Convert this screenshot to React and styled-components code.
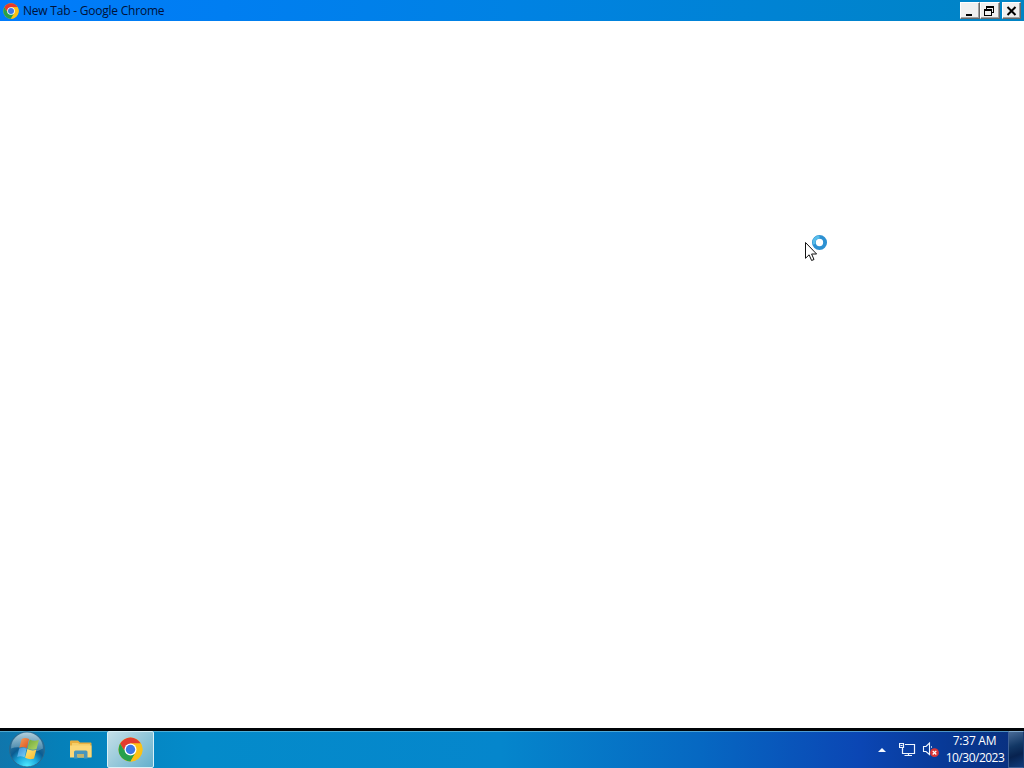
import React from 'react'
import styled, { createGlobalStyle } from 'styled-components'

const GlobalStyle = createGlobalStyle`
    body{
        margin: 0;
        overflow: hidden;
        background: #fff;
        font-family: "Open Sans", "Noto Sans", sans-serif;
    }
`

const ChromeLogo = ({ size }) => (
    <svg width={size} height={size} viewBox="0 0 48 48">
        <circle cx="24" cy="24" r="23" fill="#fbc116" />
        <path d="M4.1 12.5A23 23 0 0 1 43.9 12.5H24L14 29.8Z" fill="#e33b2e" />
        <path d="M4.1 12.5A23 23 0 0 0 24 47L34 29.8 24 24H10.7Z" fill="#27a04b" />
        <path d="M24 12.5H43.9A23 23 0 0 1 24 47L34 29.8Z" fill="#fbc116" />
        <circle cx="24" cy="24" r="11.5" fill="#fff" />
        <circle cx="24" cy="24" r="9" fill="#3c78e6" />
    </svg>
)

const StartOrb = () => (
    <svg width="38" height="38" viewBox="0 0 38 38">
        <defs>
            <radialGradient id="orb" cx="50%" cy="98%" r="95%">
                <stop offset="0" stopColor="#52ecff" />
                <stop offset="0.32" stopColor="#1ba9dd" />
                <stop offset="0.56" stopColor="#0a5c92" />
                <stop offset="1" stopColor="#4a83a3" />
            </radialGradient>
            <linearGradient id="gloss" x1="0" y1="0" x2="0" y2="1">
                <stop offset="0" stopColor="#d4e8ef" stopOpacity="0.75" />
                <stop offset="1" stopColor="#84b6ca" stopOpacity="0.4" />
            </linearGradient>
            <linearGradient id="red" x1="0" y1="0" x2="1" y2="1">
                <stop offset="0" stopColor="#f0a05c" />
                <stop offset="1" stopColor="#e0501c" />
            </linearGradient>
            <linearGradient id="green" x1="0" y1="0" x2="1" y2="1">
                <stop offset="0" stopColor="#6fa83a" />
                <stop offset="1" stopColor="#b4d868" />
            </linearGradient>
            <linearGradient id="blue" x1="0" y1="0" x2="1" y2="1">
                <stop offset="0" stopColor="#3b8fd6" />
                <stop offset="1" stopColor="#7cd2f8" />
            </linearGradient>
            <linearGradient id="yellow" x1="0" y1="0" x2="1" y2="1">
                <stop offset="0" stopColor="#ffe678" />
                <stop offset="1" stopColor="#f8b92c" />
            </linearGradient>
        </defs>
        <circle cx="19" cy="18.5" r="17.5" fill="url(#orb)" stroke="#2a6a90" />
        <path d="M3 17.5A16 16 0 0 1 35 17.5Q27 22.5 19 18.5T3 17.5Z" fill="url(#gloss)" />
        <g transform="translate(.5 -.7)">
            <path d="M13.2 8.6Q16.6 6.6 20.6 8.8L18.4 17.8Q14.6 15.7 10.8 17.5Z" fill="url(#red)" />
            <path d="M21.2 9.2Q25.4 11.6 30.4 9.8L28 18.8Q23.8 20.2 19 18.1Z" fill="url(#green)" />
            <path d="M10.6 18.2Q14.2 16.4 18.2 18.5L16 27Q12.2 25 8.7 26.6Z" fill="url(#blue)" />
            <path d="M18.9 18.8Q23.3 21 27.8 19.5L25.5 28.2Q21 29.8 16.6 27.5Z" fill="url(#yellow)" />
        </g>
    </svg>
)

const FolderIcon = () => (
    <svg width="22" height="19" viewBox="0 0 22 19">
        <path d="M0 1.5Q0 .5 1 .5H8L10 2.5H20.5Q21.5 2.5 21.5 3.5V17H0Z" fill="#e9af3e" />
        <path d="M2 3H8L9.5 4H20V8H2Z" fill="#f4ce68" />
        <path d="M0 5.5H21.5V17.5H0Z" fill="#fbd878" />
        <path d="M4 18.5V12Q4 10.5 5.5 10.5H16Q17.5 10.5 17.5 12V18.5H14V14H7.5V18.5Z" fill="#4796bd" />
        <path d="M7.5 14H14V17.5H7.5Z" fill="#c2b36d" />
    </svg>
)

const NetworkIcon = () => (
    <svg width="18" height="16" viewBox="0 0 18 16" fill="none" stroke="#eef6ff" strokeWidth="1.2">
        <path d="M6 2.5H15.5V11.5H3.5V7" />
        <path d="M9.5 11.5V13.5M5.5 13.5H13" />
        <path d="M.5 1.5H4.5V5.5H.5ZM3.5 5.5V8M1.5 3.5H3.5" />
    </svg>
)

const VolumeIcon = () => (
    <svg width="17" height="17" viewBox="0 0 17 17">
        <path d="M1.5 5.5H4L7.5 2V13.5L4 10.5H1.5Z" fill="none" stroke="#eef6ff" strokeWidth="1.1" />
        <path d="M9.5 5V7" stroke="#9cbce2" />
        <circle cx="12.5" cy="11.7" r="4.4" fill="#d93636" />
        <path d="M10.7 9.9L14.3 13.5M14.3 9.9L10.7 13.5" stroke="#fff" strokeWidth="1.3" />
    </svg>
)

const App = () => {
  return (
    <Desktop>
        <GlobalStyle />
        <TitleBar>
            <ChromeLogo size={16} />
            <Title>New Tab - Google Chrome</Title>
            <Controls>
                <ControlButton>
                    <svg width="12" height="12" viewBox="0 0 12 12"><path d="M2 9H8V11H2Z" /></svg>
                </ControlButton>
                <ControlButton>
                    <svg width="12" height="12" viewBox="0 0 12 12" shapeRendering="crispEdges">
                        <path d="M2 1H10V8H8V7H9V3H3V4H2ZM0 4H8V11H0ZM1 6V10H7V6Z" fillRule="evenodd" />
                    </svg>
                </ControlButton>
                <ControlButton $gap>
                    <svg width="12" height="12" viewBox="0 0 12 12">
                        <path d="M1.5 2L9.5 10M9.5 2L1.5 10" stroke="#000" strokeWidth="2" />
                    </svg>
                </ControlButton>
            </Controls>
        </TitleBar>
        <Content />
        <Taskbar>
            <Start><StartOrb /></Start>
            <TaskButton><FolderIcon /></TaskButton>
            <TaskButton $active><ChromeLogo size={25} /></TaskButton>
            <Tray>
                <Arrow />
                <NetworkIcon />
                <VolumeIcon />
            </Tray>
            <Clock>
                <Time>7:37 AM</Time>
                <DateText>10/30/2023</DateText>
            </Clock>
            <ShowDesktop />
        </Taskbar>
        <Cursor>
            <svg width="24" height="29" viewBox="0 0 24 29">
                <circle cx="14.5" cy="8.5" r="5.6" fill="none" stroke="#2d91d2" strokeWidth="3.9" />
                <path d="M9.2 10.2A5.6 5.6 0 0 1 14.5 2.9" fill="none" stroke="#58bdea" strokeWidth="3" />
                <path d="M.5 8.5V24.3L4.1 20.8 6.6 26.5 9 25.5 6.6 20H11.6Z" fill="#fff" stroke="#111" strokeWidth="1" />
            </svg>
        </Cursor>
    </Desktop>
  )
}

export default App

const Desktop = styled.div`
    display: flex;
    flex-direction: column;
    width: 1024px;
    height: 768px;
`
const TitleBar = styled.div`
    display: flex;
    align-items: center;
    box-sizing: border-box;
    height: 21px;
    padding: 0 3px;
    background: linear-gradient(90deg, #007bfc 0%, #0082e3 50%, #0084c4 100%);
`
const Title = styled.div`
    flex: 1;
    padding-left: 4px;
    color: #001238;
    font-size: 12px;
    line-height: 21px;
    letter-spacing: -0.22px;
    white-space: nowrap;
`
const Controls = styled.div`
    display: flex;
`
const ControlButton = styled.div`
    display: flex;
    align-items: center;
    justify-content: center;
    box-sizing: border-box;
    width: ${props => props.$gap ? '19px' : '20px'};
    height: 17px;
    margin-left: ${props => props.$gap ? '2px' : '0'};
    background: #f0f0f0;
    border: 1px solid;
    border-color: #fff #696969 #696969 #fff;
    box-shadow: inset -1px -1px 0 #a0a0a0;
`
const Content = styled.main`
    flex: 1;
    background: #fff;
`
const Taskbar = styled.div`
    display: flex;
    box-sizing: border-box;
    height: 40px;
    border-top: 3px solid #000408;
    background: linear-gradient(90deg, #1076ac 0px, #0580b9 60px, #048bca 200px, #0586cc 500px, #0668c2 700px, #0b46b4 860px, #083a98 940px, #092f7c 1024px);
    box-shadow: inset 0 1px 0 rgba(115, 195, 225, 0.65);
`
const Start = styled.div`
    display: flex;
    align-items: center;
    box-sizing: border-box;
    width: 54px;
    padding-left: 8px;
`
const TaskButton = styled.div`
    display: flex;
    align-items: center;
    justify-content: center;
    box-sizing: border-box;
    width: ${props => props.$active ? '47px' : '53px'};
    height: 37px;
    padding-bottom: 1px;
    border: 1px solid ${props => props.$active ? '#d9f1f8' : 'transparent'};
    border-radius: 2px;
    background: ${props => props.$active ? 'linear-gradient(135deg, #c4dfe8 0%, #9acadb 45%, #64b0cd 100%)' : 'none'};
`
const Tray = styled.div`
    display: flex;
    align-items: center;
    gap: 5px;
    margin-left: auto;
    padding-right: 2px;
`
const Arrow = styled.div`
    width: 0;
    height: 0;
    margin-right: 8px;
    border-left: 4px solid transparent;
    border-right: 4px solid transparent;
    border-bottom: 4px solid #f4f9ff;
`
const Clock = styled.div`
    width: 67px;
    color: #fff;
    font-size: 12px;
    line-height: 17px;
    text-align: center;
    white-space: nowrap;
`
const Time = styled.div`
    padding-top: 1px;
    letter-spacing: -0.25px;
`
const DateText = styled.div`
    padding-left: 1px;
    letter-spacing: -0.5px;
`
const ShowDesktop = styled.div`
    box-sizing: border-box;
    width: 16px;
    height: 37px;
    border: 1px solid #3e6198;
    border-right-color: #173b70;
    border-top-color: #7ea6ca;
    background: linear-gradient(160deg, #496b97 0%, #123765 40%, #07224f 65%, #103b7b 100%);
`
const Cursor = styled.div`
    position: absolute;
    top: 234px;
    left: 805px;
    line-height: 0;
`
